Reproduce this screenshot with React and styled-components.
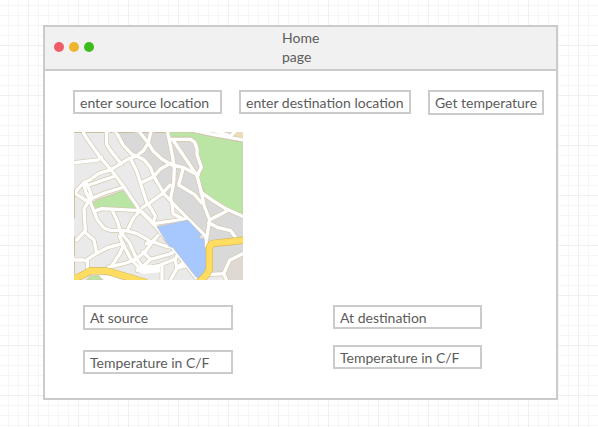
import React from "react";
import styled, { createGlobalStyle } from "styled-components";

const GlobalStyle = createGlobalStyle`
  * { box-sizing: border-box; }
  body {
    margin: 0;
    min-height: 100vh;
    color: #5c5c5c;
    font: 14px/19px Lato, sans-serif;
    background-color: #fff;
    background-image:
      linear-gradient(90deg, #f0f0f0 1px, transparent 1px),
      linear-gradient(#f0f0f0 1px, transparent 1px),
      linear-gradient(90deg, #f6f6f6 1px, transparent 1px),
      linear-gradient(#f6f6f6 1px, transparent 1px);
    background-size: 50px 50px, 50px 50px, 10px 10px, 10px 10px;
    background-position: 28px 0, 0 45px, 8px 0, 0 5px;
  }
`;

const Page = styled.div`
  padding: 25px 40px 27px 43px;
`;

const Window = styled.main`
  border: 2px solid #cbcbcb;
  background: #fff;
`;

const TitleBar = styled.header`
  display: grid;
  grid-template-columns: 237px 60px 1fr;
  align-items: center;
  padding: 1px 0 3px;
  border-bottom: 2px solid #cbcbcb;
  background: #f1f1f1;
`;

const Lights = styled.div`
  display: flex;
  gap: 5px;
  padding-left: 9px;
`;

const Light = styled.span`
  width: 10px;
  height: 10px;
  border-radius: 50%;
  background: ${(p) => p.$color};
`;

const Title = styled.h1`
  margin: 0;
  font: inherit;
`;

const Content = styled.div`
  padding: 19px 12px 24px 28px;
`;

const SearchForm = styled.form`
  display: grid;
  grid-template-columns: 149fr 172fr 116fr;
  gap: 17px;
  align-items: start;
`;

const Field = styled.input`
  width: 100%;
  min-width: 0;
  height: 24px;
  padding: 0 5px;
  border: 2px solid #cbcbcb;
  border-radius: 0;
  background: #fff;
  color: inherit;
  font: inherit;
  outline: none;
  &::placeholder { color: inherit; opacity: 1; }
`;

const Button = styled.button`
  height: 25px;
  padding: 0;
  border: 2px solid #cbcbcb;
  background: #fff;
  color: inherit;
  font: inherit;
  white-space: nowrap;
`;

const CityMap = styled.svg`
  display: block;
  width: 169px;
  height: 148px;
  margin: 17px 0 25px 1px;
`;

const Results = styled.div`
  display: grid;
  grid-template-columns: 150px 149px;
  column-gap: 100px;
  padding-left: 10px;
`;

const Place = styled.section`
  display: flex;
  flex-direction: column;
  align-items: stretch;
  gap: ${(p) => p.$gap}px;
`;

const Reading = styled.div`
  height: ${(p) => (p.$tall ? 25 : 24)}px;
  padding: 1px 5px 0;
  border: 2px solid #cbcbcb;
  background: #fff;
`;

const streets = [
  "M22-8 L40 22 L78 75 L110 112 L150 165 L198 236 L245 283 L300 352 L378 452",
  "M-8 93 L72 84 L82 76",
  "M98-8 V37 L112 59 L142 96",
  "M122-8 L148 40 L174 67 L188 72",
  "M190-8 L223 33 L238 58 L266 83 L294 99 L330 107 L372 130",
  "M232-8 L223 33 L209 55 L188 72 L160 82 L112 112",
  "M279-8 L288 35 L295 70 L301 107 L299 153 L291 193",
  "M288 22 L350 22 L362 31 L369 50 V68 L382 106 L369 131",
  "M299 27 L369 131",
  "M188 72 L211 84 L229 106 L240 134 L258 165 L271 187 L300 217 L341 259 L394 312 L400 350",
  "M239 134 L260 110 L291 94",
  "M171 83 L188 117 L200 155 L219 214",
  "M200 153 L238 134",
  "M205 226 L225 214 L262 187 L289 159",
  "M113 113 L74 124 L49 143 L30 151 L10 173 L-8 200",
  "M124 132 L88 144 L45 159",
  "M150 165 L92 183 L56 198 L44 210 L10 189",
  "M36 151 L46 173 L54 198",
  "M30 157 L35 179 L48 205",
  "M44 208 L30 231 L34 296 L8 324",
  "M46 205 L57 230 L70 263 L89 287 L108 295 H151",
  "M66 236 L84 230 L198 236",
  "M115 235 L131 270 L139 297",
  "M198 236 L178 258 L159 297 L190 305 L226 326",
  "M151 297 L137 313 L149 340 L170 380 L199 412",
  "M34 302 L60 324 L68 364 L104 346 L148 334",
  "M-8 384 H28 L40 387 L41 416",
  "M40 382 L68 364",
  "M149 340 L136 367 L113 402",
  "M102 406 L156 393 L183 383 L213 360 L236 328 L252 310",
  "M140 302 L165 330 L188 381 L208 408",
  "M207 360 L230 382 L288 366 L308 354",
  "M217 335 L236 329 L273 342 L292 345",
  "M211 400 L230 382",
  "M190 415 L257 400 L305 380 L310 369",
  "M264 402 V452",
  "M302 380 L309 407 L329 392",
  "M285 452 L309 409 L336 401",
  "M223 217 L244 252 L236 276",
  "M202 237 L229 263 L238 275 L341 260",
  "M290 197 L296 226 L297 245 L322 258",
  "M326 115 L314 159 L361 187 L383 213",
  "M369 131 L382 180 L390 220 L407 264 L398 320",
  "M381 181 L421 209 L459 232 L515 257",
  "M407 263 L449 242 L461 235",
  "M404 272 L430 286 L470 296 L484 315",
  "M411 427 L449 425 L467 385 L513 362",
  "M449 425 L461 452",
  "M345-8 L420 8 L515 25",
  "M407-8 L470 12 L490 -8",
];

const avenue =
  "M-8 444 20 432 50 416 98 417 150 432 218 452M370 456 398 427 406 412V350Q407 336 420 334L460 330 515 324";

function MapDrawing() {
  return (
    <CityMap viewBox="0 0 507 444" role="img" aria-label="City map">
      <path fill="#eaeaea" d="M0 0H507V444H0Z" />
      <path fill="#d9d9d9" d="M122 0 148 40 188 72 229 106 258 165 300 217 398 315 400 430 449 425 507 366V0Z" />
      <path fill="#ded9d3" d="M449 425 467 385 507 365V444H456Z" />
      <path fill="#ecdcb8" d="M474 0H507V20L470 12Z" />
      <g stroke="#d1c7aa" strokeWidth="3">
        <path fill="#bae5a5" d="M286 0H350L420 15 507 31V249L461 231 421 205 392 185 385 163 372 132 387 108 372 69V45L363 22 350 15H289Z" />
        <path fill="#bae5a5" d="M57 212 68 204 145 177H153L190 229V236L125 230 84 228 67 234 57 220Z" />
        <path fill="#bae5a5" d="M38 444 49 432 72 431 86 444Z" />
      </g>
      <g fill="none" strokeLinecap="round" strokeLinejoin="round">
        {streets.map((d) => <path key={d} d={d} stroke="#d3caaf" strokeWidth="14" />)}
        {streets.map((d) => <path key={d} d={d} stroke="#fff" strokeWidth="10" />)}
      </g>
      <path fill="#fff" d="M184 411 224 398 258 403V421L205 426ZM76 430 115 432 140 444H90Z" />
      <path fill="#a6c8ff" stroke="#c5c1b5" strokeWidth="2" d="M249 284 341 264 382 307 375 317 391 321V343L398 360V425L378 444 364 433 297 347 285 343Z" />
      <g fill="none" strokeLinejoin="round">
        <path stroke="#d7b954" strokeWidth="22" d={avenue} />
        <path stroke="#ffdc62" strokeWidth="18" d={avenue} />
      </g>
      <path fill="none" stroke="#c8b990" strokeWidth="3" d="M0 1H24M35 1H90M108 1H116M130 1H182M205 1H225M240 1H274M1 175V260M1 313V373M1 389V425" />
    </CityMap>
  );
}

export default function App() {
  return (
    <>
      <GlobalStyle />
      <Page>
        <Window>
          <TitleBar>
            <Lights>
              <Light $color="#ed5e68" />
              <Light $color="#efb52e" />
              <Light $color="#3cbd1b" />
            </Lights>
            <Title>Home page</Title>
          </TitleBar>
          <Content>
            <SearchForm onSubmit={(e) => e.preventDefault()}>
              <Field aria-label="Source location" placeholder="enter source location" />
              <Field aria-label="Destination location" placeholder="enter destination location" />
              <Button type="submit">Get temperature</Button>
            </SearchForm>
            <MapDrawing />
            <Results>
              <Place $gap={20}>
                <Reading $tall>At source</Reading>
                <Reading>Temperature in C/F</Reading>
              </Place>
              <Place $gap={16}>
                <Reading>At destination</Reading>
                <Reading>Temperature in C/F</Reading>
              </Place>
            </Results>
          </Content>
        </Window>
      </Page>
    </>
  );
}
